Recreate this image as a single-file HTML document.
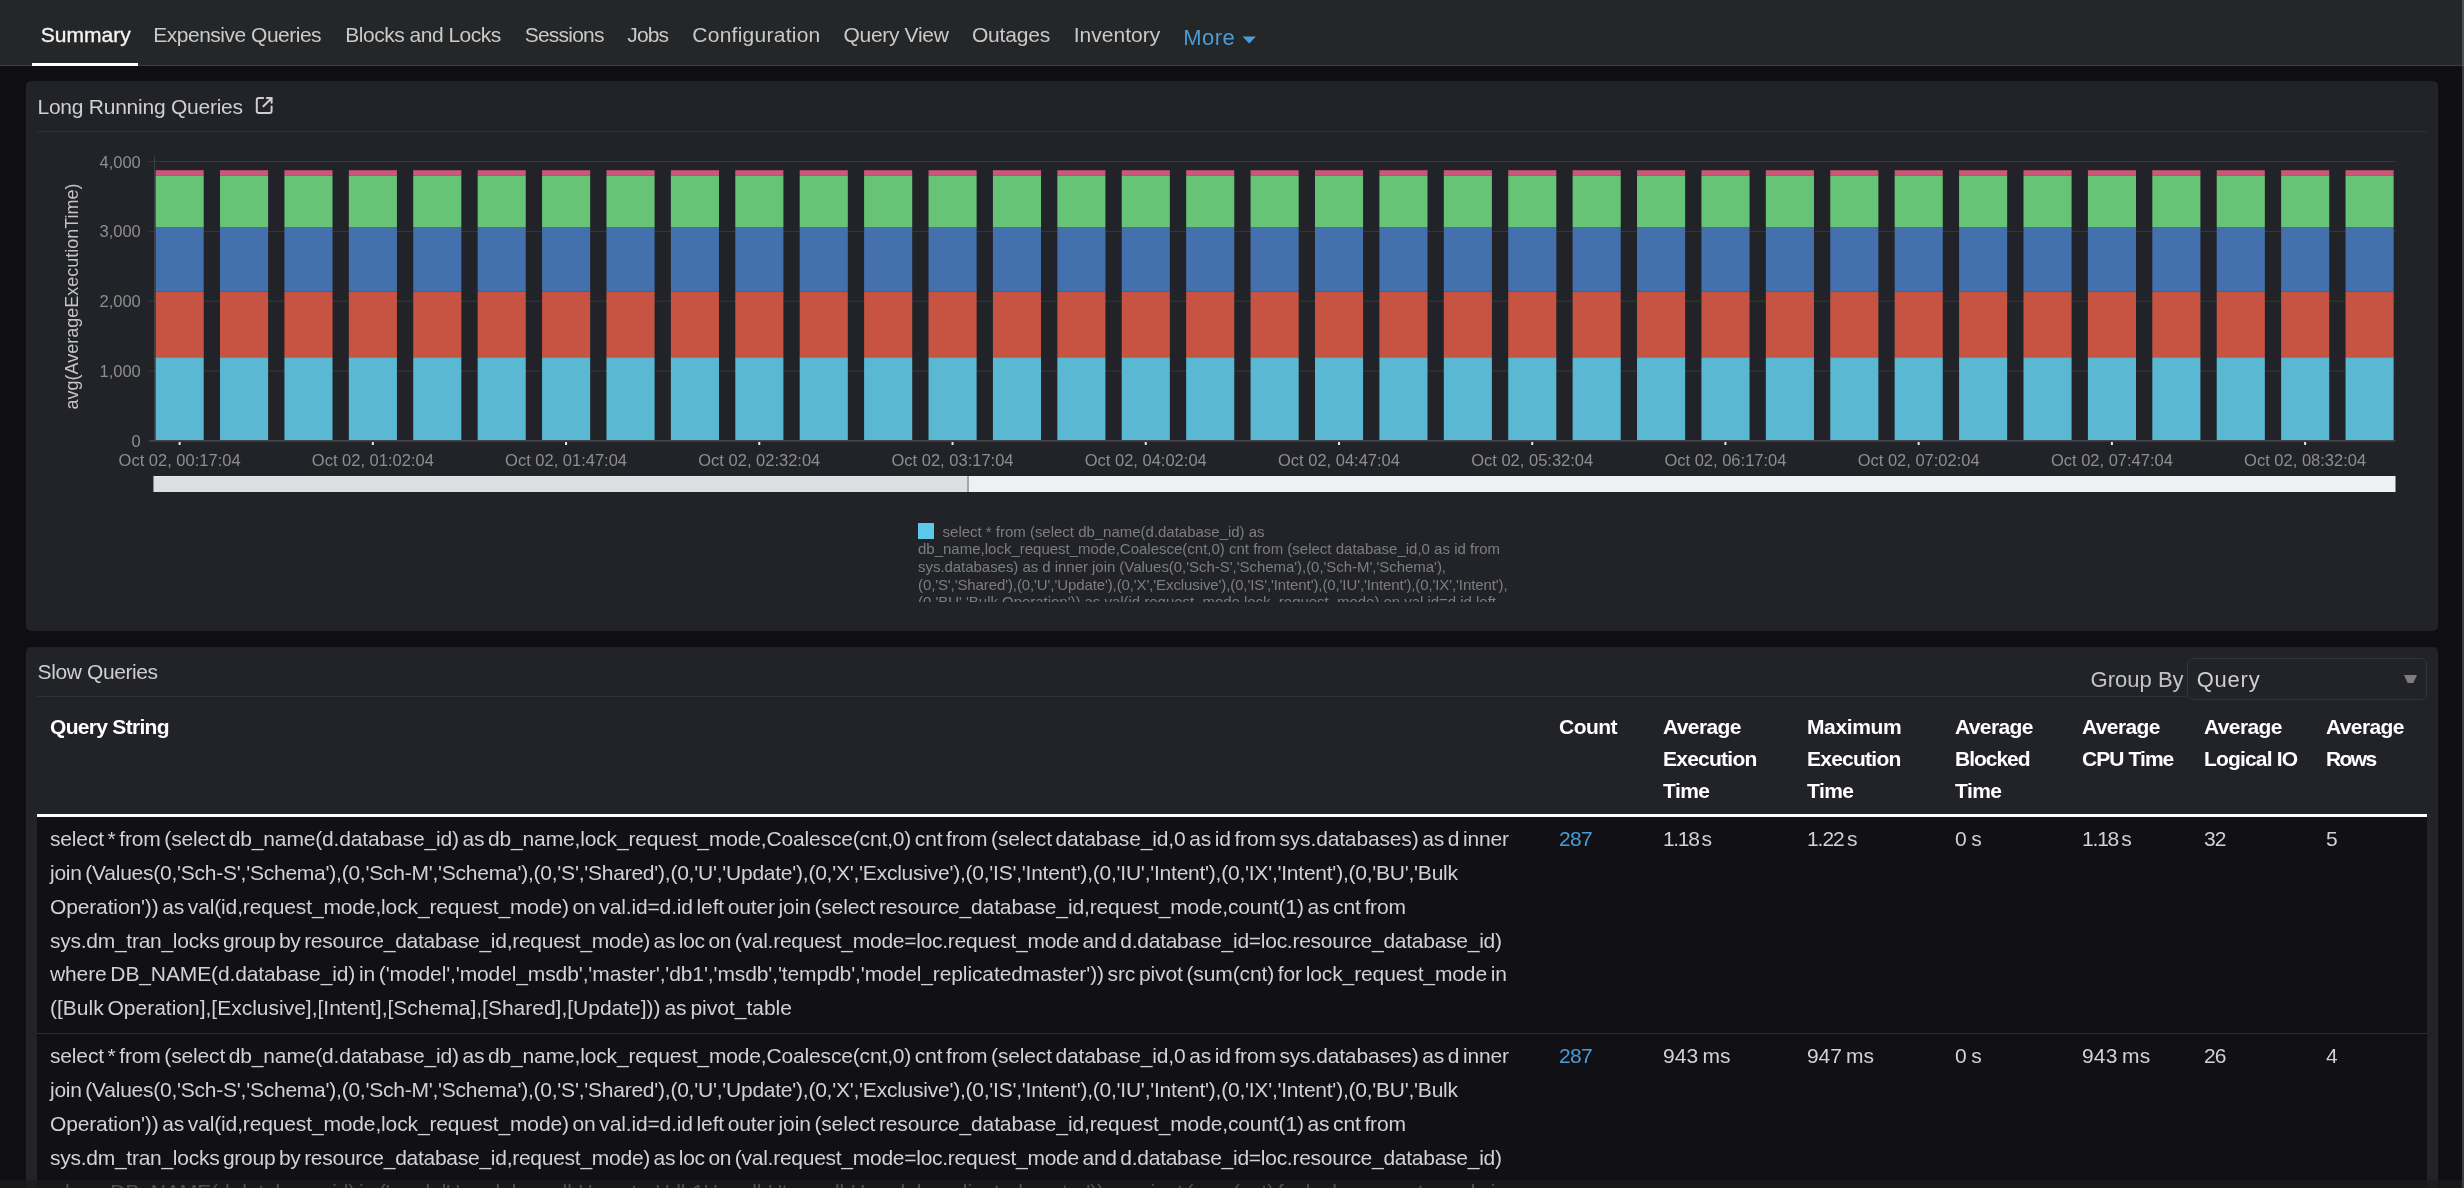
<!DOCTYPE html>
<html><head><meta charset="utf-8"><title>Summary</title>
<style>
html,body{margin:0;padding:0;}
body{width:2464px;height:1188px;overflow:hidden;background:#0f0f13;font-family:"Liberation Sans",sans-serif;position:relative;}
.t{position:absolute;white-space:pre;}
#root{position:absolute;left:0;top:0;width:2464px;height:1188px;will-change:transform;}
.abs{position:absolute;}
</style></head><body><div id="root">
<div class="abs" style="left:2462px;top:0;width:2px;height:66px;background:#4f5053"></div>
<div class="abs" style="left:2462px;top:66px;width:2px;height:1122px;background:#3c3e42"></div>
<div class="abs" style="left:0;top:0;width:2462px;height:65px;background:#252628;border-bottom:1px solid #3d3e41"></div>
<div class="abs" style="left:32px;top:63px;width:106px;height:3px;background:#ffffff"></div>
<div class="t" style="left:40.70px;top:18.72px;font-size:21px;line-height:32px;color:#f4f4f4;letter-spacing:0.025px;-webkit-text-stroke:0.35px #f4f4f4;">Summary</div>
<div class="t" style="left:153.30px;top:18.72px;font-size:21px;line-height:32px;color:#c9c9c9;letter-spacing:-0.497px;">Expensive Queries</div>
<div class="t" style="left:345.30px;top:18.72px;font-size:21px;line-height:32px;color:#c9c9c9;letter-spacing:-0.495px;">Blocks and Locks</div>
<div class="t" style="left:524.70px;top:18.72px;font-size:21px;line-height:32px;color:#c9c9c9;letter-spacing:-0.773px;">Sessions</div>
<div class="t" style="left:627.30px;top:18.72px;font-size:21px;line-height:32px;color:#c9c9c9;letter-spacing:-0.886px;">Jobs</div>
<div class="t" style="left:692.30px;top:18.72px;font-size:21px;line-height:32px;color:#c9c9c9;letter-spacing:0.257px;">Configuration</div>
<div class="t" style="left:843.50px;top:18.72px;font-size:21px;line-height:32px;color:#c9c9c9;letter-spacing:-0.318px;">Query View</div>
<div class="t" style="left:971.90px;top:18.72px;font-size:21px;line-height:32px;color:#c9c9c9;letter-spacing:-0.164px;">Outages</div>
<div class="t" style="left:1073.70px;top:18.72px;font-size:21px;line-height:32px;color:#c9c9c9;letter-spacing:0.015px;">Inventory</div>
<div class="t" style="left:1183.20px;top:20.87px;font-size:22px;line-height:33px;color:#4a9cd6;letter-spacing:0.458px;">More</div>
<svg class="abs" style="left:1242px;top:36px" width="15" height="9"><path d="M0.5 0.5 L14 0.5 L7.25 7.6 Z" fill="#4c9ed9"/></svg>
<div class="abs" style="left:26px;top:81px;width:2412px;height:550px;background:#222328;border-radius:5px"></div>
<div class="t" style="left:37.50px;top:90.72px;font-size:21px;line-height:32px;color:#cfcfcf;letter-spacing:-0.245px;">Long Running Queries</div>
<svg class="abs" style="left:254px;top:95px" width="21" height="21" viewBox="0 0 21 21"><path d="M9.2 3.1 H4.8 Q2.8 3.1 2.8 5.1 V15.9 Q2.8 17.9 4.8 17.9 H15.6 Q17.6 17.9 17.6 15.9 V11.4" fill="none" stroke="#cdcdcd" stroke-width="2" stroke-linecap="round"/><path d="M9.4 11.3 L17.2 3.5 M12.9 3.1 H17.6 V7.8" fill="none" stroke="#cdcdcd" stroke-width="2" stroke-linecap="round"/></svg>
<div class="abs" style="left:37px;top:131px;width:2390px;height:1px;background:#303136"></div>
<svg class="abs" style="left:0;top:0" width="2464" height="1188"><rect x="149" y="161.00" width="2246.5" height="1" fill="#37383c"/><rect x="149" y="230.85" width="2246.5" height="1" fill="#37383c"/><rect x="149" y="300.70" width="2246.5" height="1" fill="#37383c"/><rect x="149" y="370.55" width="2246.5" height="1" fill="#37383c"/><rect x="154" y="156" width="1" height="285" fill="#3f4043"/><rect x="149" y="440" width="2246.5" height="1.5" fill="#46474a"/><rect x="155.60" y="170.2" width="48.1" height="5.60" fill="#cc5779"/><rect x="155.60" y="175.8" width="48.1" height="51.20" fill="#67c476"/><rect x="155.60" y="227.0" width="48.1" height="64.60" fill="#4471ad"/><rect x="155.60" y="291.6" width="48.1" height="65.70" fill="#c75443"/><rect x="155.60" y="357.3" width="48.1" height="82.70" fill="#5ab8d3"/><rect x="220.01" y="170.2" width="48.1" height="5.60" fill="#cc5779"/><rect x="220.01" y="175.8" width="48.1" height="51.20" fill="#67c476"/><rect x="220.01" y="227.0" width="48.1" height="64.60" fill="#4471ad"/><rect x="220.01" y="291.6" width="48.1" height="65.70" fill="#c75443"/><rect x="220.01" y="357.3" width="48.1" height="82.70" fill="#5ab8d3"/><rect x="284.42" y="170.2" width="48.1" height="5.60" fill="#cc5779"/><rect x="284.42" y="175.8" width="48.1" height="51.20" fill="#67c476"/><rect x="284.42" y="227.0" width="48.1" height="64.60" fill="#4471ad"/><rect x="284.42" y="291.6" width="48.1" height="65.70" fill="#c75443"/><rect x="284.42" y="357.3" width="48.1" height="82.70" fill="#5ab8d3"/><rect x="348.83" y="170.2" width="48.1" height="5.60" fill="#cc5779"/><rect x="348.83" y="175.8" width="48.1" height="51.20" fill="#67c476"/><rect x="348.83" y="227.0" width="48.1" height="64.60" fill="#4471ad"/><rect x="348.83" y="291.6" width="48.1" height="65.70" fill="#c75443"/><rect x="348.83" y="357.3" width="48.1" height="82.70" fill="#5ab8d3"/><rect x="413.24" y="170.2" width="48.1" height="5.60" fill="#cc5779"/><rect x="413.24" y="175.8" width="48.1" height="51.20" fill="#67c476"/><rect x="413.24" y="227.0" width="48.1" height="64.60" fill="#4471ad"/><rect x="413.24" y="291.6" width="48.1" height="65.70" fill="#c75443"/><rect x="413.24" y="357.3" width="48.1" height="82.70" fill="#5ab8d3"/><rect x="477.65" y="170.2" width="48.1" height="5.60" fill="#cc5779"/><rect x="477.65" y="175.8" width="48.1" height="51.20" fill="#67c476"/><rect x="477.65" y="227.0" width="48.1" height="64.60" fill="#4471ad"/><rect x="477.65" y="291.6" width="48.1" height="65.70" fill="#c75443"/><rect x="477.65" y="357.3" width="48.1" height="82.70" fill="#5ab8d3"/><rect x="542.06" y="170.2" width="48.1" height="5.60" fill="#cc5779"/><rect x="542.06" y="175.8" width="48.1" height="51.20" fill="#67c476"/><rect x="542.06" y="227.0" width="48.1" height="64.60" fill="#4471ad"/><rect x="542.06" y="291.6" width="48.1" height="65.70" fill="#c75443"/><rect x="542.06" y="357.3" width="48.1" height="82.70" fill="#5ab8d3"/><rect x="606.47" y="170.2" width="48.1" height="5.60" fill="#cc5779"/><rect x="606.47" y="175.8" width="48.1" height="51.20" fill="#67c476"/><rect x="606.47" y="227.0" width="48.1" height="64.60" fill="#4471ad"/><rect x="606.47" y="291.6" width="48.1" height="65.70" fill="#c75443"/><rect x="606.47" y="357.3" width="48.1" height="82.70" fill="#5ab8d3"/><rect x="670.88" y="170.2" width="48.1" height="5.60" fill="#cc5779"/><rect x="670.88" y="175.8" width="48.1" height="51.20" fill="#67c476"/><rect x="670.88" y="227.0" width="48.1" height="64.60" fill="#4471ad"/><rect x="670.88" y="291.6" width="48.1" height="65.70" fill="#c75443"/><rect x="670.88" y="357.3" width="48.1" height="82.70" fill="#5ab8d3"/><rect x="735.29" y="170.2" width="48.1" height="5.60" fill="#cc5779"/><rect x="735.29" y="175.8" width="48.1" height="51.20" fill="#67c476"/><rect x="735.29" y="227.0" width="48.1" height="64.60" fill="#4471ad"/><rect x="735.29" y="291.6" width="48.1" height="65.70" fill="#c75443"/><rect x="735.29" y="357.3" width="48.1" height="82.70" fill="#5ab8d3"/><rect x="799.70" y="170.2" width="48.1" height="5.60" fill="#cc5779"/><rect x="799.70" y="175.8" width="48.1" height="51.20" fill="#67c476"/><rect x="799.70" y="227.0" width="48.1" height="64.60" fill="#4471ad"/><rect x="799.70" y="291.6" width="48.1" height="65.70" fill="#c75443"/><rect x="799.70" y="357.3" width="48.1" height="82.70" fill="#5ab8d3"/><rect x="864.11" y="170.2" width="48.1" height="5.60" fill="#cc5779"/><rect x="864.11" y="175.8" width="48.1" height="51.20" fill="#67c476"/><rect x="864.11" y="227.0" width="48.1" height="64.60" fill="#4471ad"/><rect x="864.11" y="291.6" width="48.1" height="65.70" fill="#c75443"/><rect x="864.11" y="357.3" width="48.1" height="82.70" fill="#5ab8d3"/><rect x="928.52" y="170.2" width="48.1" height="5.60" fill="#cc5779"/><rect x="928.52" y="175.8" width="48.1" height="51.20" fill="#67c476"/><rect x="928.52" y="227.0" width="48.1" height="64.60" fill="#4471ad"/><rect x="928.52" y="291.6" width="48.1" height="65.70" fill="#c75443"/><rect x="928.52" y="357.3" width="48.1" height="82.70" fill="#5ab8d3"/><rect x="992.93" y="170.2" width="48.1" height="5.60" fill="#cc5779"/><rect x="992.93" y="175.8" width="48.1" height="51.20" fill="#67c476"/><rect x="992.93" y="227.0" width="48.1" height="64.60" fill="#4471ad"/><rect x="992.93" y="291.6" width="48.1" height="65.70" fill="#c75443"/><rect x="992.93" y="357.3" width="48.1" height="82.70" fill="#5ab8d3"/><rect x="1057.34" y="170.2" width="48.1" height="5.60" fill="#cc5779"/><rect x="1057.34" y="175.8" width="48.1" height="51.20" fill="#67c476"/><rect x="1057.34" y="227.0" width="48.1" height="64.60" fill="#4471ad"/><rect x="1057.34" y="291.6" width="48.1" height="65.70" fill="#c75443"/><rect x="1057.34" y="357.3" width="48.1" height="82.70" fill="#5ab8d3"/><rect x="1121.75" y="170.2" width="48.1" height="5.60" fill="#cc5779"/><rect x="1121.75" y="175.8" width="48.1" height="51.20" fill="#67c476"/><rect x="1121.75" y="227.0" width="48.1" height="64.60" fill="#4471ad"/><rect x="1121.75" y="291.6" width="48.1" height="65.70" fill="#c75443"/><rect x="1121.75" y="357.3" width="48.1" height="82.70" fill="#5ab8d3"/><rect x="1186.16" y="170.2" width="48.1" height="5.60" fill="#cc5779"/><rect x="1186.16" y="175.8" width="48.1" height="51.20" fill="#67c476"/><rect x="1186.16" y="227.0" width="48.1" height="64.60" fill="#4471ad"/><rect x="1186.16" y="291.6" width="48.1" height="65.70" fill="#c75443"/><rect x="1186.16" y="357.3" width="48.1" height="82.70" fill="#5ab8d3"/><rect x="1250.57" y="170.2" width="48.1" height="5.60" fill="#cc5779"/><rect x="1250.57" y="175.8" width="48.1" height="51.20" fill="#67c476"/><rect x="1250.57" y="227.0" width="48.1" height="64.60" fill="#4471ad"/><rect x="1250.57" y="291.6" width="48.1" height="65.70" fill="#c75443"/><rect x="1250.57" y="357.3" width="48.1" height="82.70" fill="#5ab8d3"/><rect x="1314.98" y="170.2" width="48.1" height="5.60" fill="#cc5779"/><rect x="1314.98" y="175.8" width="48.1" height="51.20" fill="#67c476"/><rect x="1314.98" y="227.0" width="48.1" height="64.60" fill="#4471ad"/><rect x="1314.98" y="291.6" width="48.1" height="65.70" fill="#c75443"/><rect x="1314.98" y="357.3" width="48.1" height="82.70" fill="#5ab8d3"/><rect x="1379.39" y="170.2" width="48.1" height="5.60" fill="#cc5779"/><rect x="1379.39" y="175.8" width="48.1" height="51.20" fill="#67c476"/><rect x="1379.39" y="227.0" width="48.1" height="64.60" fill="#4471ad"/><rect x="1379.39" y="291.6" width="48.1" height="65.70" fill="#c75443"/><rect x="1379.39" y="357.3" width="48.1" height="82.70" fill="#5ab8d3"/><rect x="1443.80" y="170.2" width="48.1" height="5.60" fill="#cc5779"/><rect x="1443.80" y="175.8" width="48.1" height="51.20" fill="#67c476"/><rect x="1443.80" y="227.0" width="48.1" height="64.60" fill="#4471ad"/><rect x="1443.80" y="291.6" width="48.1" height="65.70" fill="#c75443"/><rect x="1443.80" y="357.3" width="48.1" height="82.70" fill="#5ab8d3"/><rect x="1508.21" y="170.2" width="48.1" height="5.60" fill="#cc5779"/><rect x="1508.21" y="175.8" width="48.1" height="51.20" fill="#67c476"/><rect x="1508.21" y="227.0" width="48.1" height="64.60" fill="#4471ad"/><rect x="1508.21" y="291.6" width="48.1" height="65.70" fill="#c75443"/><rect x="1508.21" y="357.3" width="48.1" height="82.70" fill="#5ab8d3"/><rect x="1572.62" y="170.2" width="48.1" height="5.60" fill="#cc5779"/><rect x="1572.62" y="175.8" width="48.1" height="51.20" fill="#67c476"/><rect x="1572.62" y="227.0" width="48.1" height="64.60" fill="#4471ad"/><rect x="1572.62" y="291.6" width="48.1" height="65.70" fill="#c75443"/><rect x="1572.62" y="357.3" width="48.1" height="82.70" fill="#5ab8d3"/><rect x="1637.03" y="170.2" width="48.1" height="5.60" fill="#cc5779"/><rect x="1637.03" y="175.8" width="48.1" height="51.20" fill="#67c476"/><rect x="1637.03" y="227.0" width="48.1" height="64.60" fill="#4471ad"/><rect x="1637.03" y="291.6" width="48.1" height="65.70" fill="#c75443"/><rect x="1637.03" y="357.3" width="48.1" height="82.70" fill="#5ab8d3"/><rect x="1701.44" y="170.2" width="48.1" height="5.60" fill="#cc5779"/><rect x="1701.44" y="175.8" width="48.1" height="51.20" fill="#67c476"/><rect x="1701.44" y="227.0" width="48.1" height="64.60" fill="#4471ad"/><rect x="1701.44" y="291.6" width="48.1" height="65.70" fill="#c75443"/><rect x="1701.44" y="357.3" width="48.1" height="82.70" fill="#5ab8d3"/><rect x="1765.85" y="170.2" width="48.1" height="5.60" fill="#cc5779"/><rect x="1765.85" y="175.8" width="48.1" height="51.20" fill="#67c476"/><rect x="1765.85" y="227.0" width="48.1" height="64.60" fill="#4471ad"/><rect x="1765.85" y="291.6" width="48.1" height="65.70" fill="#c75443"/><rect x="1765.85" y="357.3" width="48.1" height="82.70" fill="#5ab8d3"/><rect x="1830.26" y="170.2" width="48.1" height="5.60" fill="#cc5779"/><rect x="1830.26" y="175.8" width="48.1" height="51.20" fill="#67c476"/><rect x="1830.26" y="227.0" width="48.1" height="64.60" fill="#4471ad"/><rect x="1830.26" y="291.6" width="48.1" height="65.70" fill="#c75443"/><rect x="1830.26" y="357.3" width="48.1" height="82.70" fill="#5ab8d3"/><rect x="1894.67" y="170.2" width="48.1" height="5.60" fill="#cc5779"/><rect x="1894.67" y="175.8" width="48.1" height="51.20" fill="#67c476"/><rect x="1894.67" y="227.0" width="48.1" height="64.60" fill="#4471ad"/><rect x="1894.67" y="291.6" width="48.1" height="65.70" fill="#c75443"/><rect x="1894.67" y="357.3" width="48.1" height="82.70" fill="#5ab8d3"/><rect x="1959.08" y="170.2" width="48.1" height="5.60" fill="#cc5779"/><rect x="1959.08" y="175.8" width="48.1" height="51.20" fill="#67c476"/><rect x="1959.08" y="227.0" width="48.1" height="64.60" fill="#4471ad"/><rect x="1959.08" y="291.6" width="48.1" height="65.70" fill="#c75443"/><rect x="1959.08" y="357.3" width="48.1" height="82.70" fill="#5ab8d3"/><rect x="2023.49" y="170.2" width="48.1" height="5.60" fill="#cc5779"/><rect x="2023.49" y="175.8" width="48.1" height="51.20" fill="#67c476"/><rect x="2023.49" y="227.0" width="48.1" height="64.60" fill="#4471ad"/><rect x="2023.49" y="291.6" width="48.1" height="65.70" fill="#c75443"/><rect x="2023.49" y="357.3" width="48.1" height="82.70" fill="#5ab8d3"/><rect x="2087.90" y="170.2" width="48.1" height="5.60" fill="#cc5779"/><rect x="2087.90" y="175.8" width="48.1" height="51.20" fill="#67c476"/><rect x="2087.90" y="227.0" width="48.1" height="64.60" fill="#4471ad"/><rect x="2087.90" y="291.6" width="48.1" height="65.70" fill="#c75443"/><rect x="2087.90" y="357.3" width="48.1" height="82.70" fill="#5ab8d3"/><rect x="2152.31" y="170.2" width="48.1" height="5.60" fill="#cc5779"/><rect x="2152.31" y="175.8" width="48.1" height="51.20" fill="#67c476"/><rect x="2152.31" y="227.0" width="48.1" height="64.60" fill="#4471ad"/><rect x="2152.31" y="291.6" width="48.1" height="65.70" fill="#c75443"/><rect x="2152.31" y="357.3" width="48.1" height="82.70" fill="#5ab8d3"/><rect x="2216.72" y="170.2" width="48.1" height="5.60" fill="#cc5779"/><rect x="2216.72" y="175.8" width="48.1" height="51.20" fill="#67c476"/><rect x="2216.72" y="227.0" width="48.1" height="64.60" fill="#4471ad"/><rect x="2216.72" y="291.6" width="48.1" height="65.70" fill="#c75443"/><rect x="2216.72" y="357.3" width="48.1" height="82.70" fill="#5ab8d3"/><rect x="2281.13" y="170.2" width="48.1" height="5.60" fill="#cc5779"/><rect x="2281.13" y="175.8" width="48.1" height="51.20" fill="#67c476"/><rect x="2281.13" y="227.0" width="48.1" height="64.60" fill="#4471ad"/><rect x="2281.13" y="291.6" width="48.1" height="65.70" fill="#c75443"/><rect x="2281.13" y="357.3" width="48.1" height="82.70" fill="#5ab8d3"/><rect x="2345.54" y="170.2" width="48.1" height="5.60" fill="#cc5779"/><rect x="2345.54" y="175.8" width="48.1" height="51.20" fill="#67c476"/><rect x="2345.54" y="227.0" width="48.1" height="64.60" fill="#4471ad"/><rect x="2345.54" y="291.6" width="48.1" height="65.70" fill="#c75443"/><rect x="2345.54" y="357.3" width="48.1" height="82.70" fill="#5ab8d3"/><text x="140.8" y="167.50" text-anchor="end" font-family="Liberation Sans" font-size="16.5" fill="#8e8e8e">4,000</text><text x="140.8" y="237.35" text-anchor="end" font-family="Liberation Sans" font-size="16.5" fill="#8e8e8e">3,000</text><text x="140.8" y="307.20" text-anchor="end" font-family="Liberation Sans" font-size="16.5" fill="#8e8e8e">2,000</text><text x="140.8" y="377.05" text-anchor="end" font-family="Liberation Sans" font-size="16.5" fill="#8e8e8e">1,000</text><text x="140.8" y="446.90" text-anchor="end" font-family="Liberation Sans" font-size="16.5" fill="#8e8e8e">0</text><text transform="translate(77.5,296.5) rotate(-90)" text-anchor="middle" font-family="Liberation Sans" font-size="18" fill="#c4c4c4">avg(AverageExecutionTime)</text><rect x="178.60" y="442" width="2" height="3" fill="#e8e8e8"/><text x="179.60" y="466" text-anchor="middle" font-family="Liberation Sans" font-size="16.5" fill="#8e8e8e">Oct 02, 00:17:04</text><rect x="371.83" y="442" width="2" height="3" fill="#e8e8e8"/><text x="372.83" y="466" text-anchor="middle" font-family="Liberation Sans" font-size="16.5" fill="#8e8e8e">Oct 02, 01:02:04</text><rect x="565.06" y="442" width="2" height="3" fill="#e8e8e8"/><text x="566.06" y="466" text-anchor="middle" font-family="Liberation Sans" font-size="16.5" fill="#8e8e8e">Oct 02, 01:47:04</text><rect x="758.29" y="442" width="2" height="3" fill="#e8e8e8"/><text x="759.29" y="466" text-anchor="middle" font-family="Liberation Sans" font-size="16.5" fill="#8e8e8e">Oct 02, 02:32:04</text><rect x="951.52" y="442" width="2" height="3" fill="#e8e8e8"/><text x="952.52" y="466" text-anchor="middle" font-family="Liberation Sans" font-size="16.5" fill="#8e8e8e">Oct 02, 03:17:04</text><rect x="1144.75" y="442" width="2" height="3" fill="#e8e8e8"/><text x="1145.75" y="466" text-anchor="middle" font-family="Liberation Sans" font-size="16.5" fill="#8e8e8e">Oct 02, 04:02:04</text><rect x="1337.98" y="442" width="2" height="3" fill="#e8e8e8"/><text x="1338.98" y="466" text-anchor="middle" font-family="Liberation Sans" font-size="16.5" fill="#8e8e8e">Oct 02, 04:47:04</text><rect x="1531.21" y="442" width="2" height="3" fill="#e8e8e8"/><text x="1532.21" y="466" text-anchor="middle" font-family="Liberation Sans" font-size="16.5" fill="#8e8e8e">Oct 02, 05:32:04</text><rect x="1724.44" y="442" width="2" height="3" fill="#e8e8e8"/><text x="1725.44" y="466" text-anchor="middle" font-family="Liberation Sans" font-size="16.5" fill="#8e8e8e">Oct 02, 06:17:04</text><rect x="1917.67" y="442" width="2" height="3" fill="#e8e8e8"/><text x="1918.67" y="466" text-anchor="middle" font-family="Liberation Sans" font-size="16.5" fill="#8e8e8e">Oct 02, 07:02:04</text><rect x="2110.90" y="442" width="2" height="3" fill="#e8e8e8"/><text x="2111.90" y="466" text-anchor="middle" font-family="Liberation Sans" font-size="16.5" fill="#8e8e8e">Oct 02, 07:47:04</text><rect x="2304.13" y="442" width="2" height="3" fill="#e8e8e8"/><text x="2305.13" y="466" text-anchor="middle" font-family="Liberation Sans" font-size="16.5" fill="#8e8e8e">Oct 02, 08:32:04</text><rect x="153.5" y="476" width="2242" height="16" fill="#eff0f1"/><rect x="154" y="476.5" width="813" height="15.5" fill="#dcdfe0"/><rect x="967" y="476" width="2" height="16" fill="#a3a5a6"/></svg>
<div class="abs" style="left:918px;top:523px;width:16px;height:16px;background:#5ac8e6"></div>
<div class="abs" style="left:918px;top:518px;width:620px;height:84px;overflow:hidden">
<div class="t" style="left:24.60px;top:2.60px;font-size:15px;line-height:22px;color:#7e7e7e;letter-spacing:-0.015px;">select * from (select db_name(d.database_id) as</div>
<div class="t" style="left:0.00px;top:20.30px;font-size:15px;line-height:22px;color:#7e7e7e;letter-spacing:0.000px;">db_name,lock_request_mode,Coalesce(cnt,0) cnt from (select database_id,0 as id from</div>
<div class="t" style="left:0.00px;top:38.00px;font-size:15px;line-height:22px;color:#7e7e7e;letter-spacing:-0.040px;">sys.databases) as d inner join (Values(0,&#x27;Sch-S&#x27;,&#x27;Schema&#x27;),(0,&#x27;Sch-M&#x27;,&#x27;Schema&#x27;),</div>
<div class="t" style="left:0.00px;top:55.70px;font-size:15px;line-height:22px;color:#7e7e7e;letter-spacing:-0.103px;">(0,&#x27;S&#x27;,&#x27;Shared&#x27;),(0,&#x27;U&#x27;,&#x27;Update&#x27;),(0,&#x27;X&#x27;,&#x27;Exclusive&#x27;),(0,&#x27;IS&#x27;,&#x27;Intent&#x27;),(0,&#x27;IU&#x27;,&#x27;Intent&#x27;),(0,&#x27;IX&#x27;,&#x27;Intent&#x27;),</div>
<div class="t" style="left:0.00px;top:73.40px;font-size:15px;line-height:22px;color:#7e7e7e;letter-spacing:-0.029px;">(0,&#x27;BU&#x27;,&#x27;Bulk Operation&#x27;)) as val(id,request_mode,lock_request_mode) on val.id=d.id left</div>
</div>
<div class="abs" style="left:26px;top:647px;width:2412px;height:600px;background:#222328;border-radius:5px"></div>
<div class="t" style="left:37.60px;top:655.72px;font-size:21px;line-height:32px;color:#cfcfcf;letter-spacing:-0.399px;">Slow Queries</div>
<div class="abs" style="left:37px;top:696px;width:2150px;height:1px;background:#303136"></div>
<div class="t" style="left:2090.60px;top:662.57px;font-size:22px;line-height:33px;color:#c4c4c4;letter-spacing:0.010px;">Group By</div>
<div class="abs" style="left:2187px;top:658px;width:238px;height:40px;border:1px solid #34353a;border-radius:6px"></div>
<div class="t" style="left:2196.70px;top:662.57px;font-size:22px;line-height:33px;color:#cfcfcf;letter-spacing:0.772px;">Query</div>
<svg class="abs" style="left:2403px;top:674px" width="16" height="10"><path d="M1 1 H14 L10.3 9 H4.7 Z" fill="#7d7d7d"/></svg>
<div class="t" style="left:50.00px;top:710.72px;font-size:21px;line-height:32px;color:#ffffff;letter-spacing:-0.699px;font-weight:bold;">Query String</div>
<div class="t" style="left:1559.00px;top:710.72px;font-size:21px;line-height:32px;color:#ffffff;letter-spacing:-0.536px;font-weight:bold;">Count</div>
<div class="t" style="left:1663.00px;top:710.72px;font-size:21px;line-height:32px;color:#ffffff;letter-spacing:-0.601px;font-weight:bold;">Average</div>
<div class="t" style="left:1663.00px;top:742.72px;font-size:21px;line-height:32px;color:#ffffff;letter-spacing:-0.757px;font-weight:bold;">Execution</div>
<div class="t" style="left:1663.00px;top:774.72px;font-size:21px;line-height:32px;color:#ffffff;letter-spacing:-0.545px;font-weight:bold;">Time</div>
<div class="t" style="left:1807.00px;top:710.72px;font-size:21px;line-height:32px;color:#ffffff;letter-spacing:-0.377px;font-weight:bold;">Maximum</div>
<div class="t" style="left:1807.00px;top:742.72px;font-size:21px;line-height:32px;color:#ffffff;letter-spacing:-0.757px;font-weight:bold;">Execution</div>
<div class="t" style="left:1807.00px;top:774.72px;font-size:21px;line-height:32px;color:#ffffff;letter-spacing:-0.545px;font-weight:bold;">Time</div>
<div class="t" style="left:1955.00px;top:710.72px;font-size:21px;line-height:32px;color:#ffffff;letter-spacing:-0.601px;font-weight:bold;">Average</div>
<div class="t" style="left:1955.00px;top:742.72px;font-size:21px;line-height:32px;color:#ffffff;letter-spacing:-1.032px;font-weight:bold;">Blocked</div>
<div class="t" style="left:1955.00px;top:774.72px;font-size:21px;line-height:32px;color:#ffffff;letter-spacing:-0.545px;font-weight:bold;">Time</div>
<div class="t" style="left:2082.00px;top:710.72px;font-size:21px;line-height:32px;color:#ffffff;letter-spacing:-0.601px;font-weight:bold;">Average</div>
<div class="t" style="left:2082.00px;top:742.72px;font-size:21px;line-height:32px;color:#ffffff;letter-spacing:-0.930px;font-weight:bold;">CPU Time</div>
<div class="t" style="left:2204.00px;top:710.72px;font-size:21px;line-height:32px;color:#ffffff;letter-spacing:-0.601px;font-weight:bold;">Average</div>
<div class="t" style="left:2204.00px;top:742.72px;font-size:21px;line-height:32px;color:#ffffff;letter-spacing:-0.835px;font-weight:bold;">Logical IO</div>
<div class="t" style="left:2326.00px;top:710.72px;font-size:21px;line-height:32px;color:#ffffff;letter-spacing:-0.601px;font-weight:bold;">Average</div>
<div class="t" style="left:2326.00px;top:742.72px;font-size:21px;line-height:32px;color:#ffffff;letter-spacing:-1.569px;font-weight:bold;">Rows</div>
<div class="abs" style="left:37px;top:814px;width:2390px;height:3px;background:#ffffff"></div>
<div class="abs" style="left:37px;top:817px;width:2390px;height:371px;background:#111115"></div>
<div class="abs" style="left:37px;top:1033px;width:2390px;height:1px;background:#2c2d31"></div>
<div class="t" style="left:50.00px;top:822.72px;font-size:21px;line-height:32px;color:#d2d2d2;letter-spacing:-0.157px;word-spacing:-2px;">select * from (select db_name(d.database_id) as db_name,lock_request_mode,Coalesce(cnt,0) cnt from (select database_id,0 as id from sys.databases) as d inner</div>
<div class="t" style="left:50.00px;top:856.66px;font-size:21px;line-height:32px;color:#d2d2d2;letter-spacing:-0.240px;word-spacing:-2px;">join (Values(0,&#x27;Sch-S&#x27;,&#x27;Schema&#x27;),(0,&#x27;Sch-M&#x27;,&#x27;Schema&#x27;),(0,&#x27;S&#x27;,&#x27;Shared&#x27;),(0,&#x27;U&#x27;,&#x27;Update&#x27;),(0,&#x27;X&#x27;,&#x27;Exclusive&#x27;),(0,&#x27;IS&#x27;,&#x27;Intent&#x27;),(0,&#x27;IU&#x27;,&#x27;Intent&#x27;),(0,&#x27;IX&#x27;,&#x27;Intent&#x27;),(0,&#x27;BU&#x27;,&#x27;Bulk</div>
<div class="t" style="left:50.00px;top:890.60px;font-size:21px;line-height:32px;color:#d2d2d2;letter-spacing:-0.141px;word-spacing:-2px;">Operation&#x27;)) as val(id,request_mode,lock_request_mode) on val.id=d.id left outer join (select resource_database_id,request_mode,count(1) as cnt from</div>
<div class="t" style="left:50.00px;top:924.54px;font-size:21px;line-height:32px;color:#d2d2d2;letter-spacing:-0.265px;word-spacing:-2px;">sys.dm_tran_locks group by resource_database_id,request_mode) as loc on (val.request_mode=loc.request_mode and d.database_id=loc.resource_database_id)</div>
<div class="t" style="left:50.00px;top:958.48px;font-size:21px;line-height:32px;color:#d2d2d2;letter-spacing:-0.116px;word-spacing:-2px;">where DB_NAME(d.database_id) in (&#x27;model&#x27;,&#x27;model_msdb&#x27;,&#x27;master&#x27;,&#x27;db1&#x27;,&#x27;msdb&#x27;,&#x27;tempdb&#x27;,&#x27;model_replicatedmaster&#x27;)) src pivot (sum(cnt) for lock_request_mode in</div>
<div class="t" style="left:50.00px;top:992.42px;font-size:21px;line-height:32px;color:#d2d2d2;letter-spacing:-0.003px;word-spacing:-2px;">([Bulk Operation],[Exclusive],[Intent],[Schema],[Shared],[Update])) as pivot_table</div>
<div class="t" style="left:1559.00px;top:822.72px;font-size:21px;line-height:32px;color:#4a9cd6;letter-spacing:-0.680px;word-spacing:-1.5px;">287</div>
<div class="t" style="left:1663.00px;top:822.72px;font-size:21px;line-height:32px;color:#d2d2d2;letter-spacing:-1.328px;word-spacing:-1.5px;">1.18 s</div>
<div class="t" style="left:1807.00px;top:822.72px;font-size:21px;line-height:32px;color:#d2d2d2;letter-spacing:-1.061px;word-spacing:-1.5px;">1.22 s</div>
<div class="t" style="left:1955.00px;top:822.72px;font-size:21px;line-height:32px;color:#d2d2d2;letter-spacing:0.079px;word-spacing:-1.5px;">0 s</div>
<div class="t" style="left:2082.00px;top:822.72px;font-size:21px;line-height:32px;color:#d2d2d2;letter-spacing:-1.194px;word-spacing:-1.5px;">1.18 s</div>
<div class="t" style="left:2204.00px;top:822.72px;font-size:21px;line-height:32px;color:#d2d2d2;letter-spacing:-0.906px;word-spacing:-1.5px;">32</div>
<div class="t" style="left:2326.00px;top:822.72px;font-size:21px;line-height:32px;color:#d2d2d2;word-spacing:-1.5px;">5</div>
<div class="t" style="left:50.00px;top:1039.82px;font-size:21px;line-height:32px;color:#d2d2d2;letter-spacing:-0.157px;word-spacing:-2px;">select * from (select db_name(d.database_id) as db_name,lock_request_mode,Coalesce(cnt,0) cnt from (select database_id,0 as id from sys.databases) as d inner</div>
<div class="t" style="left:50.00px;top:1073.76px;font-size:21px;line-height:32px;color:#d2d2d2;letter-spacing:-0.240px;word-spacing:-2px;">join (Values(0,&#x27;Sch-S&#x27;,&#x27;Schema&#x27;),(0,&#x27;Sch-M&#x27;,&#x27;Schema&#x27;),(0,&#x27;S&#x27;,&#x27;Shared&#x27;),(0,&#x27;U&#x27;,&#x27;Update&#x27;),(0,&#x27;X&#x27;,&#x27;Exclusive&#x27;),(0,&#x27;IS&#x27;,&#x27;Intent&#x27;),(0,&#x27;IU&#x27;,&#x27;Intent&#x27;),(0,&#x27;IX&#x27;,&#x27;Intent&#x27;),(0,&#x27;BU&#x27;,&#x27;Bulk</div>
<div class="t" style="left:50.00px;top:1107.70px;font-size:21px;line-height:32px;color:#d2d2d2;letter-spacing:-0.141px;word-spacing:-2px;">Operation&#x27;)) as val(id,request_mode,lock_request_mode) on val.id=d.id left outer join (select resource_database_id,request_mode,count(1) as cnt from</div>
<div class="t" style="left:50.00px;top:1141.64px;font-size:21px;line-height:32px;color:#d2d2d2;letter-spacing:-0.265px;word-spacing:-2px;">sys.dm_tran_locks group by resource_database_id,request_mode) as loc on (val.request_mode=loc.request_mode and d.database_id=loc.resource_database_id)</div>
<div class="t" style="left:50.00px;top:1175.58px;font-size:21px;line-height:32px;color:#d2d2d2;letter-spacing:-0.116px;word-spacing:-2px;">where DB_NAME(d.database_id) in (&#x27;model&#x27;,&#x27;model_msdb&#x27;,&#x27;master&#x27;,&#x27;db1&#x27;,&#x27;msdb&#x27;,&#x27;tempdb&#x27;,&#x27;model_replicatedmaster&#x27;)) src pivot (sum(cnt) for lock_request_mode in</div>
<div class="t" style="left:1559.00px;top:1039.82px;font-size:21px;line-height:32px;color:#4a9cd6;letter-spacing:-0.680px;word-spacing:-1.5px;">287</div>
<div class="t" style="left:1663.00px;top:1039.82px;font-size:21px;line-height:32px;color:#d2d2d2;letter-spacing:0.051px;word-spacing:-1.5px;">943 ms</div>
<div class="t" style="left:1807.00px;top:1039.82px;font-size:21px;line-height:32px;color:#d2d2d2;letter-spacing:-0.082px;word-spacing:-1.5px;">947 ms</div>
<div class="t" style="left:1955.00px;top:1039.82px;font-size:21px;line-height:32px;color:#d2d2d2;letter-spacing:0.079px;word-spacing:-1.5px;">0 s</div>
<div class="t" style="left:2082.00px;top:1039.82px;font-size:21px;line-height:32px;color:#d2d2d2;letter-spacing:0.184px;word-spacing:-1.5px;">943 ms</div>
<div class="t" style="left:2204.00px;top:1039.82px;font-size:21px;line-height:32px;color:#d2d2d2;letter-spacing:-0.906px;word-spacing:-1.5px;">26</div>
<div class="t" style="left:2326.00px;top:1039.82px;font-size:21px;line-height:32px;color:#d2d2d2;word-spacing:-1.5px;">4</div>
<div class="abs" style="left:0;top:1180px;width:2462px;height:8px;background:rgba(27,28,31,0.72)"></div>
</div></body></html>
